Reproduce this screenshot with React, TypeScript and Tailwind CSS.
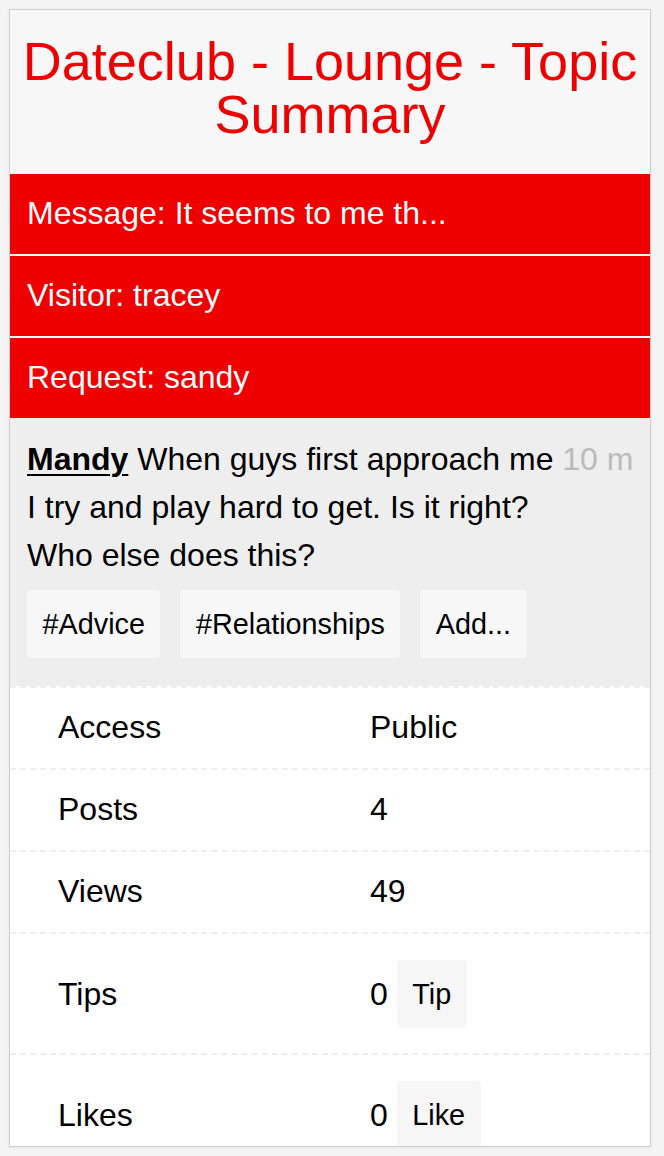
import React from "react";

const rows: { label: string; value: string; button?: string }[] = [
  { label: "Access", value: "Public" },
  { label: "Posts", value: "4" },
  { label: "Views", value: "49" },
  { label: "Tips", value: "0", button: "Tip" },
  { label: "Likes", value: "0", button: "Like" },
];

export default function App() {
  return (
    <div className="h-[1156px] bg-[#f4f4f4] pt-[9px] pl-[9px] font-['Liberation_Sans',Arial,sans-serif] text-black">
      <div className="w-[642px] h-[1138px] border border-[#cfcfcf] bg-[#f7f7f7] overflow-hidden shadow-[0_1px_3px_rgba(0,0,0,0.06)]">
        {/* Title */}
        <div className="h-[164px] pt-[25px] text-center text-[#ee0000] text-[54px] leading-[53px]">
          Dateclub - Lounge - Topic Summary
        </div>

        {/* Red bands */}
        <div className="bg-[#ee0000] text-white text-[32px]">
          <div className="h-[82px] leading-[78px] px-[17px] border-b-2 border-white">
            Message: It seems to me th...
          </div>
          <div className="h-[82px] leading-[79px] px-[17px] border-b-2 border-white">
            Visitor: tracey
          </div>
          <div className="h-[80px] leading-[79px] px-[17px]">Request: sandy</div>
        </div>

        {/* Post */}
        <div className="bg-[#eeeeee] pt-[17px] pb-[28px] px-[16px]">
          <p className="text-[32px] leading-[48px] pl-[1px]">
            <span className="font-bold underline decoration-2 underline-offset-[4px]">Mandy</span>{" "}
            When guys first approach me <span className="text-[#bbbbbb]">10 m</span> I try and play hard to get.
            Is it right?
            <br />
            Who else does this?
          </p>
          <div className="mt-[11px] flex gap-[20px] pl-[1px]">
            {["#Advice", "#Relationships", "Add..."].map((t) => (
              <span
                key={t}
                className="h-[68px] leading-[68px] px-[15.5px] rounded-[4px] bg-[#f7f7f7] text-[28.8px]"
              >
                {t}
              </span>
            ))}
          </div>
        </div>

        {/* Table */}
        <div className="bg-white text-[32px]">
          {rows.map((r) => (
            <div
              key={r.label}
              className={`border-t-2 border-dashed border-[#eeeeee] flex pl-[48px] ${
                r.button ? "h-[121px] items-center" : "h-[82px] leading-[78px]"
              }`}
            >
              <div className="w-[312px]">{r.label}</div>
              {r.button ? (
                <div className="flex items-center">
                  <span>{r.value}</span>
                  <span className="ml-[9px] h-[68px] leading-[68px] px-[15.5px] rounded-[4px] bg-[#f6f6f6] text-[28.8px]">
                    {r.button}
                  </span>
                </div>
              ) : (
                <div>{r.value}</div>
              )}
            </div>
          ))}
        </div>
      </div>
    </div>
  );
}
